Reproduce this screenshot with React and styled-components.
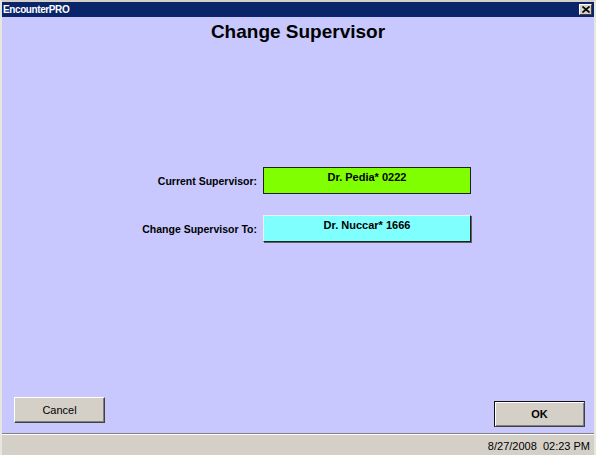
import React from "react";
import styled, { createGlobalStyle } from "styled-components";

const GlobalStyle = createGlobalStyle`
  html, body {
    margin: 0;
    padding: 0;
    background: #d4d0c8;
  }
  * {
    box-sizing: border-box;
  }
`;

const Window = styled.div`
  width: 596px;
  height: 455px;
  display: flex;
  flex-direction: column;
  background: #d4d0c8;
  border-top: 1px solid #d4d0c8;
  border-left: 2px solid #e8e6e0;
  border-right: 2px solid #e8e6e0;
  font-family: "Liberation Sans", Arial, sans-serif;
  overflow: hidden;
`;

const TitleBar = styled.div`
  margin-top: 1px;
  height: 15px;
  display: flex;
  align-items: center;
  justify-content: space-between;
  padding: 0 2px 0 1px;
  background: #0a246a;
  color: #fff;
  font-size: 10px;
  font-weight: bold;
  letter-spacing: -0.4px;
`;

const CloseButton = styled.div`
  width: 13px;
  height: 11px;
  display: flex;
  align-items: center;
  justify-content: center;
  background: #d4d0c8;
  border-top: 1px solid #fff;
  border-left: 1px solid #fff;
  border-right: 1px solid #404040;
  border-bottom: 1px solid #404040;
`;

const Content = styled.div`
  flex: 1;
  display: flex;
  flex-direction: column;
  background: #c8c8fe;
`;

const Heading = styled.h1`
  margin: 1px 0 0;
  height: 27px;
  line-height: 27px;
  text-align: center;
  font-size: 19px;
  font-weight: bold;
  color: #000;
`;

const Form = styled.div`
  margin-top: 122px;
  display: flex;
  flex-direction: column;
  gap: 21px;
`;

const Row = styled.div`
  display: flex;
  align-items: center;
  gap: 6px;
`;

const Label = styled.div`
  flex: 0 0 255px;
  text-align: right;
  font-size: 10.5px;
  font-weight: bold;
  color: #000;
`;

const Field = styled.div`
  width: 208px;
  height: 27px;
  padding-top: 3px;
  text-align: center;
  font-size: 11px;
  font-weight: bold;
  color: #000;
  background: ${(p) => p.$color};
  border: 1px solid ${(p) => (p.$raised ? "#f0f0f0" : "#202020")};
  border-right-color: #202020;
  border-bottom-color: #202020;
  box-shadow: ${(p) => (p.$raised ? "1px 1px 0 #606060" : "none")};
`;

const Buttons = styled.div`
  margin-top: auto;
  display: flex;
  justify-content: space-between;
  align-items: flex-start;
  padding: 0 9px 6px 12px;
`;

const Button = styled.button`
  width: 91px;
  height: 26px;
  margin-top: ${(p) => (p.$default ? "4px" : "0")};
  margin-bottom: ${(p) => (p.$default ? "0" : "4px")};
  padding: 0;
  font-family: "Liberation Sans", Arial, sans-serif;
  font-size: 11px;
  font-weight: ${(p) => (p.$default ? "bold" : "normal")};
  color: #000;
  background: #d4d0c8;
  border-top: 1px solid ${(p) => (p.$default ? "#101010" : "#fff")};
  border-left: 1px solid ${(p) => (p.$default ? "#101010" : "#fff")};
  border-right: 1px solid #404040;
  border-bottom: 1px solid #404040;
  box-shadow: ${(p) =>
    p.$default
      ? "inset 1px 1px 0 #fff, inset -1px -1px 0 #808080"
      : "inset -1px -1px 0 #808080"};
`;

const StatusBar = styled.div`
  height: 22px;
  display: flex;
  align-items: center;
  justify-content: flex-end;
  padding: 2px 4px 0;
  border-top: 1px solid #808080;
  box-shadow: inset 0 1px 0 #fff;
  background: #d4d0c8;
  font-size: 11px;
  color: #000;
  white-space: pre;
`;

export default function App() {
  return (
    <>
      <GlobalStyle />
      <Window>
        <TitleBar>
          <span>EncounterPRO</span>
          <CloseButton>
            <svg width="8" height="7" viewBox="0 0 8 7">
              <path d="M0.5 0.5 L7.5 6.5 M7.5 0.5 L0.5 6.5" stroke="#000" strokeWidth="1.6" />
            </svg>
          </CloseButton>
        </TitleBar>
        <Content>
          <Heading>Change Supervisor</Heading>
          <Form>
            <Row>
              <Label>Current Supervisor:</Label>
              <Field $color="#80ff00">Dr. Pedia* 0222</Field>
            </Row>
            <Row>
              <Label>Change Supervisor To:</Label>
              <Field $color="#80ffff" $raised>
                Dr. Nuccar* 1666
              </Field>
            </Row>
          </Form>
          <Buttons>
            <Button>Cancel</Button>
            <Button $default>OK</Button>
          </Buttons>
        </Content>
        <StatusBar>8/27/2008  02:23 PM</StatusBar>
      </Window>
    </>
  );
}
